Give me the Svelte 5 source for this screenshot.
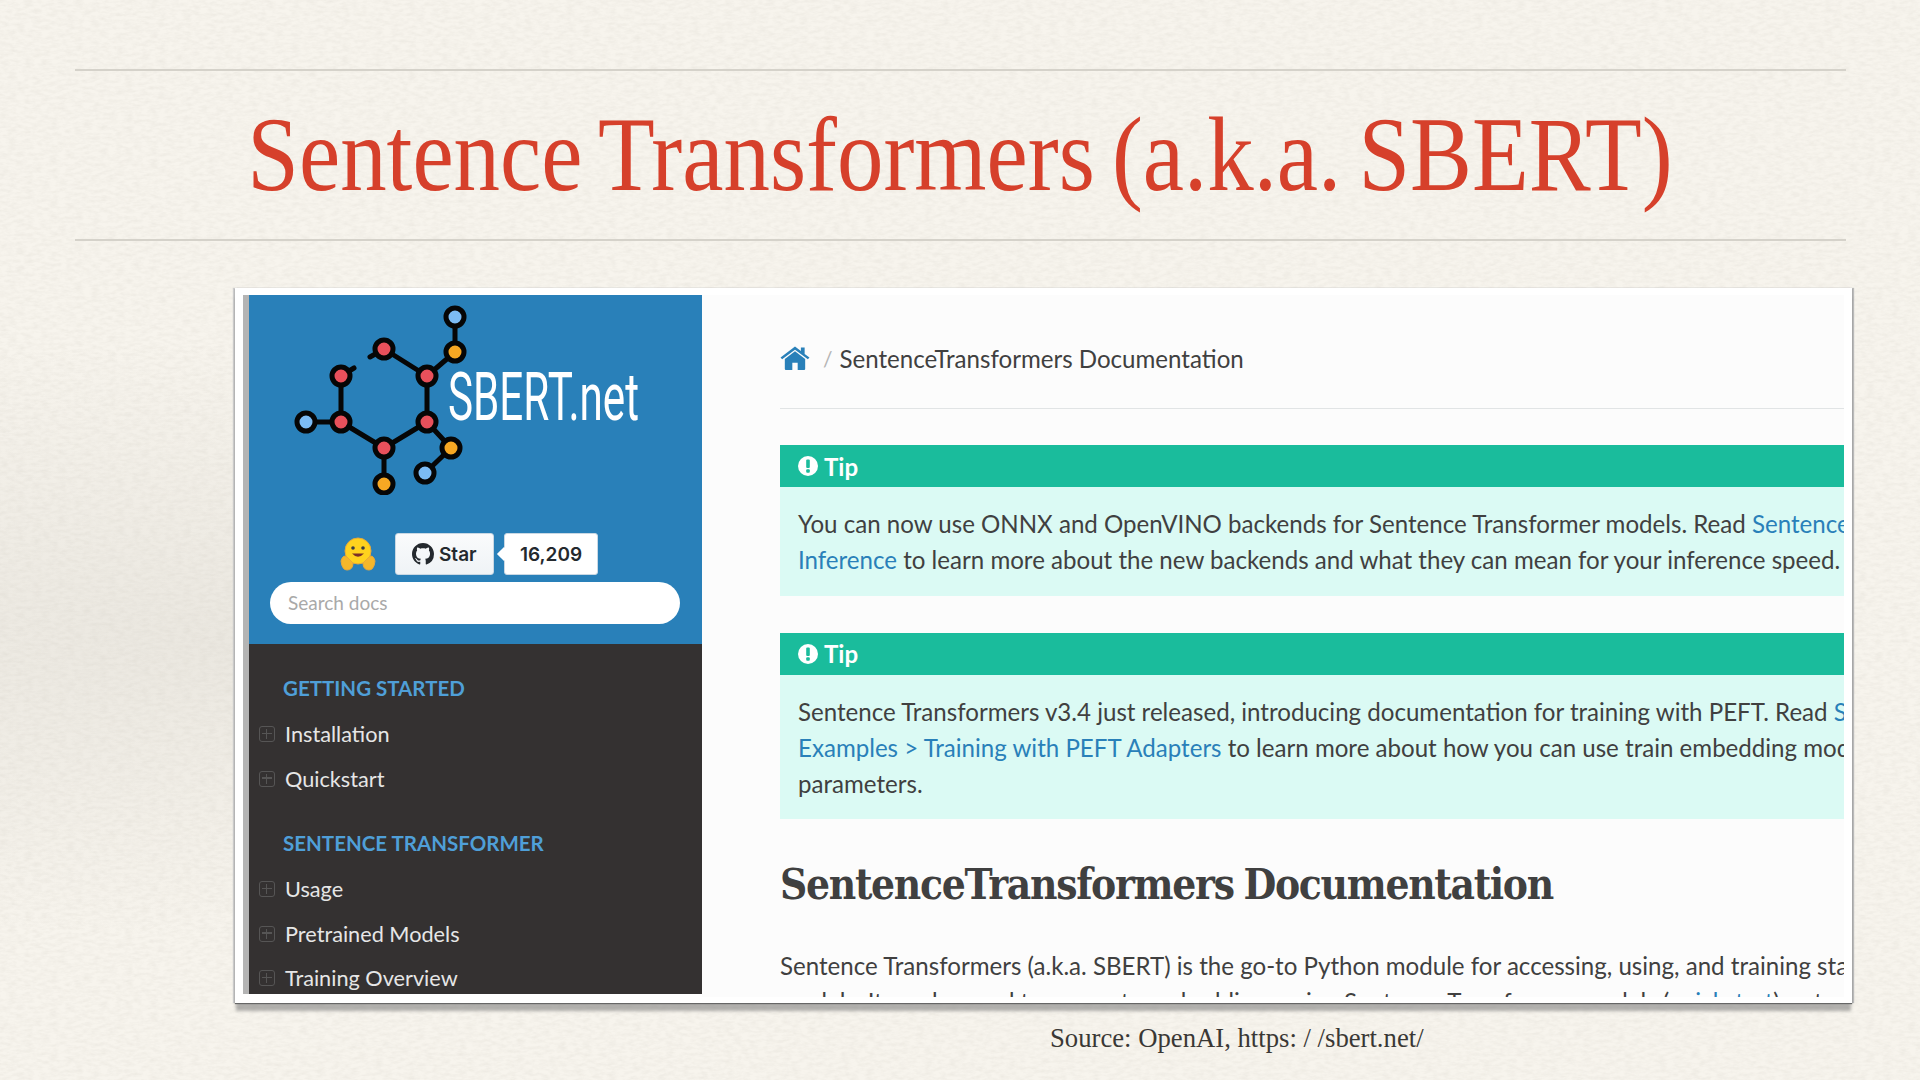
<script>
  // sidebar navigation, grouped by caption
  const nav = [
    { caption: "GETTING STARTED", items: ["Installation", "Quickstart"] },
    { caption: "SENTENCE TRANSFORMER", items: ["Usage", "Pretrained Models", "Training Overview"] }
  ];

  // molecule logo: ring of red atoms with blue and orange ends
  const bonds = [
    [147, 22, 147, 57], [147, 57, 119, 81], [119, 81, 119, 127], [119, 127, 76, 153],
    [76, 153, 33, 127], [33, 127, 33, 81], [76, 54, 119, 81], [76, 54, 62, 62], [33, 81, 46, 73],
    [33, 127, -2, 127], [76, 153, 76, 189], [119, 127, 143, 153], [143, 153, 117, 178]
  ];
  const atoms = [
    [147, 22, "#7cbcf5"], [147, 57, "#f7a823"], [76, 54, "#e8505b"], [119, 81, "#e8505b"],
    [119, 127, "#e8505b"], [76, 153, "#e8505b"], [33, 127, "#e8505b"], [33, 81, "#e8505b"],
    [-2, 127, "#7cbcf5"], [76, 189, "#f7a823"], [143, 153, "#f7a823"], [117, 178, "#7cbcf5"]
  ];
</script>

<div class="slide">
  <svg class="paper" width="1920" height="1080" aria-hidden="true">
    <filter id="grain">
      <feTurbulence type="fractalNoise" baseFrequency="0.12 0.3" numOctaves="4" seed="4" />
      <feColorMatrix values="0 0 0 0 0.55  0 0 0 0 0.52  0 0 0 0 0.46  0.32 0 0 0 -0.11" />
    </filter>
    <rect width="1920" height="1080" filter="url(#grain)" />
  </svg>

  <hr class="rule" />
  <h1 class="title">Sentence Transformers (a.k.a. SBERT)</h1>
  <hr class="rule" />

  <div class="card">
    <aside class="sidebar">
      <div class="brand">
        <svg class="logo" width="410" height="200" viewBox="-20 0 410 200">
          {#each bonds as b}
            <line x1={b[0]} y1={b[1]} x2={b[2]} y2={b[3]} stroke="#060606" stroke-width="5" stroke-linecap="round" />
          {/each}
          {#each atoms as a}
            <circle cx={a[0]} cy={a[1]} r="9" fill={a[2]} stroke="#060606" stroke-width="5" />
          {/each}
          <text x="140" y="125" fill="#fff" font-family="Roboto" font-size="66" textLength="191" lengthAdjust="spacingAndGlyphs">SBERT.net</text>
        </svg>

        <div class="badges">
          <svg class="hug" width="36" height="34" viewBox="0 0 36 34" aria-hidden="true">
            <circle cx="18" cy="14" r="13" fill="#ffd21e" stroke="#e8a93a" />
            <circle cx="13" cy="11" r="1.8" fill="#3a3b45" />
            <circle cx="23" cy="11" r="1.8" fill="#3a3b45" />
            <path d="M12 16.500Q18 23 24 16.500Z" fill="#7a2f28" />
            <path d="M1 24Q3 17 7 20L13 26Q13 33 7 33Q2 33 1 24Z" fill="#f5b72b" stroke="#e8a93a" />
            <path d="M35 24Q33 17 29 20L23 26Q23 33 29 33Q34 33 35 24Z" fill="#f5b72b" stroke="#e8a93a" />
          </svg>
          <span class="star">
            <svg width="22" height="22" viewBox="0 0 16 16" aria-hidden="true">
              <path fill="#24292e" d="M8 0C3.58 0 0 3.58 0 8c0 3.54 2.29 6.53 5.47 7.59.4.07.55-.17.55-.38 0-.19-.01-.82-.01-1.490-2.010.37-2.530-.49-2.690-.94-.09-.23-.48-.94-.82-1.130-.28-.15-.68-.52-.01-.53.63-.01 1.080.58 1.230.82.72 1.210 1.870.87 2.330.66.07-.52.28-.87.51-1.070-1.780-.2-3.640-.89-3.640-3.950 0-.87.31-1.590.82-2.150-.08-.2-.36-1.020.08-2.120 0 0 .67-.21 2.200.82.64-.18 1.320-.27 2-.27.68 0 1.360.09 2 .27 1.530-1.040 2.200-.82 2.200-.82.44 1.100.16 1.920.08 2.120.51.56.82 1.270.82 2.150 0 3.070-1.870 3.750-3.650 3.950.29.25.54.73.54 1.480 0 1.070-.01 1.930-.01 2.200 0 .21.15.46.55.38A8.013 8.013 0 0016 8c0-4.420-3.580-8-8-8z" />
            </svg>
            Star
          </span>
          <span class="count">16,209</span>
        </div>

        <div class="search">Search docs</div>
      </div>

      <nav class="menu">
        {#each nav as group}
          <p class="caption">{group.caption}</p>
          <ul>
            {#each group.items as item}
              <li><span class="plus"></span>{item}</li>
            {/each}
          </ul>
        {/each}
      </nav>
    </aside>

    <main class="content">
      <div class="crumbs">
        <svg width="30" height="25" viewBox="0 0 28 26" preserveAspectRatio="none" aria-hidden="true">
          <path fill="#2980b9" d="M14 5.500 4.500 13.500V24q0 1 1 1h6v-7.500h5V25h6q1 0 1-1V13.500Z" />
          <path fill="#2980b9" d="M14 0.500 0.500 12l1.500 1.800L14 3.800l12 10 1.500-1.800-4.500-3.800V1.500h-3.500v3.800Z" />
        </svg>
        <span class="sep">/</span>
        <span>SentenceTransformers Documentation</span>
      </div>
      <hr class="crumb-rule" />

      <section class="tip">
        <p class="tip-title">
          <svg width="20" height="20" viewBox="0 0 20 20" aria-hidden="true">
            <circle cx="10" cy="10" r="10" fill="#fff" />
            <rect x="8.200" y="3.500" width="3.600" height="8.500" rx="1" fill="#1abc9c" />
            <rect x="8.200" y="13.300" width="3.600" height="3.400" rx="1" fill="#1abc9c" />
          </svg>
          Tip
        </p>
        <div class="tip-body">
          <p>You can now use ONNX and OpenVINO backends for Sentence Transformer models. Read <a href="#top">Sentence Transformer &gt; Usage &gt; Speeding up</a></p>
          <p><a href="#top">Inference</a> to learn more about the new backends and what they can mean for your inference speed.</p>
        </div>
      </section>

      <section class="tip">
        <p class="tip-title">
          <svg width="20" height="20" viewBox="0 0 20 20" aria-hidden="true">
            <circle cx="10" cy="10" r="10" fill="#fff" />
            <rect x="8.200" y="3.500" width="3.600" height="8.500" rx="1" fill="#1abc9c" />
            <rect x="8.200" y="13.300" width="3.600" height="3.400" rx="1" fill="#1abc9c" />
          </svg>
          Tip
        </p>
        <div class="tip-body">
          <p>Sentence Transformers v3.4 just released, introducing documentation for training with PEFT. Read <a href="#top">Sentence Transformer &gt; Training</a></p>
          <p><a href="#top">Examples &gt; Training with PEFT Adapters</a> to learn more about how you can use train embedding models without training all model</p>
          <p>parameters.</p>
        </div>
      </section>

      <h2>SentenceTransformers Documentation</h2>
      <p class="para">Sentence Transformers (a.k.a. SBERT) is the go-to Python module for accessing, using, and training state-of-the-art embedding</p>
      <p class="para">models. It can be used to compute embeddings using Sentence Transformer models (<a href="#top">quickstart</a>) or to calculate</p>
    </main>
  </div>

  <p class="source">Source: OpenAI, https: / /sbert.net/</p>
</div>

<style>
  :global(body) {
    margin: 0;
    background: #f6f3ec;
  }
  .slide {
    position: relative;
    width: 1920px;
    height: 1080px;
    overflow: hidden;
    padding-top: 69px;
    box-sizing: border-box;
    background:
      radial-gradient(ellipse 1100px 300px at 250px 640px, rgba(120, 115, 105, 0.1), transparent),
      #f7f4ed;
  }
  .paper {
    position: absolute;
    top: 0;
    left: 0;
  }
  .rule {
    position: relative;
    margin: 0 74px 0 75px;
    border: 0;
    border-top: 2px solid #d5d2ca;
  }
  .title {
    position: relative;
    margin: 0;
    height: 168px;
    text-align: center;
    font: 400 106px/168px "Liberation Serif", serif;
    word-spacing: -7px;
    color: #d6402b;
    white-space: nowrap;
    transform: scaleX(0.876);
  }
  .card {
    position: relative;
    display: flex;
    box-sizing: border-box;
    width: 1617px;
    height: 715px;
    margin: 47px 0 0 235px;
    padding: 7px 8px 0 8px;
    background: #fff;
    box-shadow:
      0 1px 1px #666,
      0 9px 3px -1px rgba(130, 130, 130, 0.6),
      2px 0 1px #bbb,
      -2px 0 1px #ccc;
  }
  .sidebar {
    flex: none;
    display: flex;
    flex-direction: column;
    box-sizing: border-box;
    width: 459px;
    margin-bottom: 9px;
    border-left: 6px solid #b4b4b4;
    font-family: Lato, sans-serif;
    overflow: hidden;
  }
  .brand {
    flex: none;
    box-sizing: border-box;
    height: 349px;
    background: #2980b9;
  }
  .logo {
    display: block;
    margin-left: 39px;
  }
  .badges {
    display: flex;
    align-items: center;
    margin: 38px 0 7px 91px;
    height: 42px;
  }
  .hug {
    margin-right: 19px;
  }
  .star,
  .count {
    display: flex;
    align-items: center;
    box-sizing: border-box;
    height: 42px;
    border: 1px solid #c9d8e4;
    border-radius: 3px;
    font: 600 19px Inter, sans-serif;
    color: #24292e;
  }
  .star {
    width: 99px;
    padding-left: 16px;
    gap: 5px;
    background: linear-gradient(#fafbfc, #eff3f6);
  }
  .count {
    position: relative;
    justify-content: center;
    width: 94px;
    margin-left: 10px;
    background: #fff;
  }
  .count::before {
    content: "";
    position: absolute;
    left: -6px;
    top: 15px;
    width: 10px;
    height: 10px;
    background: #fff;
    transform: rotate(45deg);
  }
  .search {
    box-sizing: border-box;
    width: 410px;
    height: 42px;
    margin-left: 21px;
    padding-left: 18px;
    border-radius: 21px;
    background: #fff;
    color: #a9a9a9;
    font-size: 19px;
    line-height: 42px;
  }
  .menu {
    flex: 1;
    background: #343131;
    padding-top: 27px;
  }
  .caption {
    margin: 0 0 7px 34px;
    height: 34px;
    font-size: 20.500px;
    font-weight: 700;
    line-height: 34px;
    color: #4f9fd8;
  }
  .menu ul {
    margin: 0 0 25px;
    padding: 0;
    list-style: none;
  }
  .menu li {
    display: flex;
    align-items: center;
    height: 44.500px;
    padding-left: 10px;
    font-size: 21.700px;
    color: #e6e6e6;
  }
  .plus {
    position: relative;
    flex: none;
    box-sizing: border-box;
    width: 16px;
    height: 16px;
    margin-right: 10px;
    border: 1.500px solid #565555;
    border-radius: 3px;
  }
  .plus::before,
  .plus::after {
    content: "";
    position: absolute;
    background: #565555;
  }
  .plus::before {
    left: 2px;
    right: 2px;
    top: 5.500px;
    height: 1.500px;
  }
  .plus::after {
    top: 2px;
    bottom: 2px;
    left: 5.500px;
    width: 1.500px;
  }
  .content {
    flex: 1;
    min-width: 0;
    box-sizing: border-box;
    margin-bottom: 6px;
    padding-left: 78px;
    overflow: hidden;
    background: #fcfcfc;
    font-family: Lato, sans-serif;
    font-size: 24.100px;
    color: #404040;
    white-space: nowrap;
  }
  .content a {
    color: #2980b9;
    text-decoration: none;
  }
  .crumbs {
    display: flex;
    align-items: center;
    height: 47px;
    margin-top: 40px;
  }
  .sep {
    margin: 0 7px 0 13px;
    color: #b5b5b5;
    font-size: 21px;
  }
  .crumb-rule {
    margin: 0;
    margin-top: 26px;
    border: 0;
    border-top: 1px solid #e1e4e5;
  }
  .tip {
    margin-top: 36px;
    background: #dbfaf4;
  }
  .tip + .tip {
    margin-top: 37px;
  }
  .tip-title {
    display: flex;
    align-items: center;
    gap: 6px;
    height: 42px;
    margin: 0;
    padding-left: 18px;
    background: #1abc9c;
    color: #fff;
    font-weight: 700;
  }
  .tip-body {
    padding: 19px 0 17px 18px;
  }
  .tip-body p {
    margin: 0;
    line-height: 36.300px;
  }
  h2 {
    margin: 36.500px 0 0;
    font: 700 42px/58px "DejaVu Serif Condensed", "DejaVu Serif", serif;
    letter-spacing: -1.300px;
    word-spacing: -2px;
    color: #404040;
  }
  .para {
    margin: 0;
    line-height: 36px;
  }
  h2 + .para {
    margin-top: 34px;
  }
  .source {
    position: relative;
    margin: 20px 0 0 1050px;
    font: 400 26.700px/30px "Liberation Serif", serif;
    color: #3a3835;
    white-space: nowrap;
  }
</style>
